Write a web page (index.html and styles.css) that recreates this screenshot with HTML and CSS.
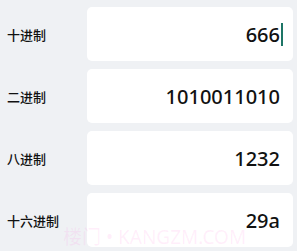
FILE: index.html
```html
<!DOCTYPE html>
<html lang="zh">
<head>
    <meta charset="UTF-8" />
    <meta name="viewport" content="width=device-width, initial-scale=1.0"/>
    <title>进制转换</title>
    <link rel="stylesheet" href="styles.css">
</head>
<body>
<div class="app">
    <div class="row">
        <div class="label">十进制</div>
        <div class="field"><span class="value">666</span><span class="caret"></span></div>
    </div>
    <div class="row">
        <div class="label">二进制</div>
        <div class="field"><span class="value">1010011010</span></div>
    </div>
    <div class="row">
        <div class="label">八进制</div>
        <div class="field"><span class="value">1232</span></div>
    </div>
    <div class="row">
        <div class="label">十六进制</div>
        <div class="field"><span class="value">29a</span></div>
    </div>
    <div class="watermark">楼门 • KANGZM.COM</div>
</div>
</body>
</html>
```

FILE: styles.css
```css
* {
    margin: 0;
    padding: 0;
    box-sizing: border-box;
}
html, body {
    height: 100%;
    background: #eff1f4;
    color: #111;
    font-family: "Noto Sans", "Noto Sans CJK SC", sans-serif;
}
.app {
    position: relative;
    display: flex;
    flex-direction: column;
    gap: 8px;
    padding: 7px 4px 4px 7px;
}
.row {
    display: flex;
    align-items: center;
    height: 54px;
}
.label {
    width: 80px;
    font-size: 13px;
    font-weight: 500;
    font-family: "Noto Sans CJK SC", sans-serif;
    color: #111;
}
.field {
    flex: 1;
    height: 100%;
    display: flex;
    align-items: center;
    justify-content: flex-end;
    padding-right: 13px;
    background: #fff;
    border-radius: 5px;
}
.value {
    font-size: 20px;
    font-weight: 500;
}
.caret {
    width: 2px;
    height: 23px;
    margin-left: 1px;
    margin-right: -3px;
    background: #1d7566;
}
.watermark {
    position: absolute;
    left: 63px;
    top: 222px;
    font-size: 19px;
    color: rgba(255, 120, 220, 0.12);
    white-space: nowrap;
    pointer-events: none;
}
```
